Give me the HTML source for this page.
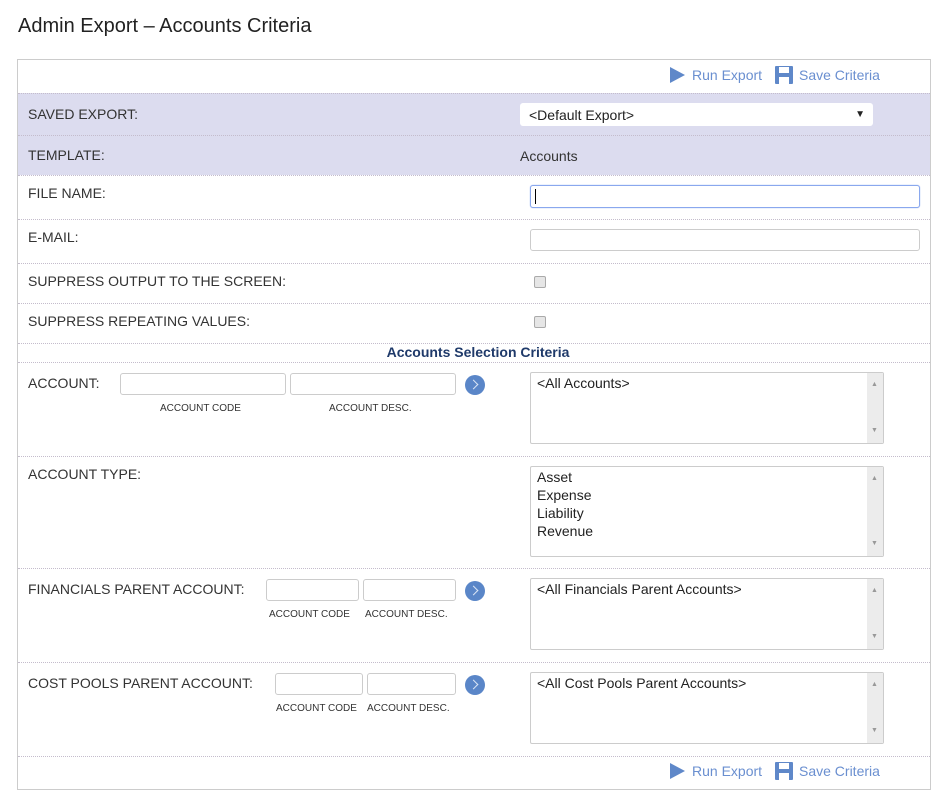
<!DOCTYPE html>
<html><head><meta charset="utf-8"><style>
body{margin:0;width:949px;height:806px;background:#fff;font-family:"Liberation Sans",sans-serif;position:relative;overflow:hidden;color:#333}
.a{position:absolute}
.t{font-size:14px;color:#333}
.hl{position:absolute;left:18px;width:912px;height:0;border-top:1px dotted #c4bccc}
.inp{position:absolute;height:20px;border:1px solid #ccc;border-radius:3px;background:#fff}
.sm{position:absolute;font-size:10px;color:#333}
.go{position:absolute;width:20px;height:20px;border-radius:50%;background:#5a86c8}
.go:after{content:"";position:absolute;left:5px;top:6px;width:6px;height:6px;border-right:1.5px solid #dbe6f5;border-top:1.5px solid #dbe6f5;transform:rotate(45deg)}
.lb{position:absolute;border:1px solid #ccc;border-radius:2px;background:#fff;font-size:14px;color:#222;line-height:18px;padding:1px 6px;box-sizing:border-box}
.sb{position:absolute;right:0;top:0;bottom:0;width:16px;background:#ececec}
.sb:before{content:"▲";position:absolute;top:3px;left:4px;font-size:7px;color:#999}
.sb:after{content:"▼";position:absolute;bottom:3px;left:4px;font-size:7px;color:#999}
.cb{position:absolute;width:10px;height:10px;border:1px solid #aaa;border-radius:2px;background:#e6e6e6}
.tb{position:absolute;font-size:14px;color:#6a8fd0}
</style></head><body>
<div class="a" style="left:18px;top:15px;font-size:20px;color:#222">Admin Export – Accounts Criteria</div>
<div class="a" style="left:17px;top:59px;width:912px;height:729px;border:1px solid #ccc"></div>
<div class="a" style="left:18px;top:93px;width:912px;height:82px;background:#dcdcef"></div>
<div class="hl" style="top:93px"></div><div class="hl" style="top:135px"></div><div class="hl" style="top:175px"></div>
<div class="hl" style="top:219px"></div><div class="hl" style="top:263px"></div><div class="hl" style="top:303px"></div>
<div class="hl" style="top:343px"></div><div class="hl" style="top:362px"></div><div class="hl" style="top:456px"></div>
<div class="hl" style="top:568px"></div><div class="hl" style="top:662px"></div><div class="hl" style="top:756px"></div>

<svg class="a" style="left:669px;top:66px" width="17" height="18"><path d="M1 1 L16 9 L1 17Z" fill="#5f88c9"/></svg>
<div class="tb" style="left:692px;top:67px">Run Export</div>
<svg class="a" style="left:775px;top:66px" width="18" height="18"><rect x="0" y="0" width="18" height="18" rx="1" fill="#5f88c9"/><rect x="4" y="1" width="10" height="6" fill="#fff"/><rect x="4" y="11" width="10" height="7" fill="#fff"/></svg>
<div class="tb" style="left:799px;top:67px">Save Criteria</div>
<svg class="a" style="left:669px;top:762px" width="17" height="18"><path d="M1 1 L16 9 L1 17Z" fill="#5f88c9"/></svg>
<div class="tb" style="left:692px;top:763px">Run Export</div>
<svg class="a" style="left:775px;top:762px" width="18" height="18"><rect x="0" y="0" width="18" height="18" rx="1" fill="#5f88c9"/><rect x="4" y="1" width="10" height="6" fill="#fff"/><rect x="4" y="11" width="10" height="7" fill="#fff"/></svg>
<div class="tb" style="left:799px;top:763px">Save Criteria</div>

<div class="a t" style="left:28px;top:106px">SAVED EXPORT:</div>
<div class="a" style="left:520px;top:103px;width:353px;height:23px;background:#fff;border-radius:3px;font-size:14px;color:#222"><span style="position:absolute;left:9px;top:4px">&lt;Default Export&gt;</span><span style="position:absolute;right:8px;top:6px;font-size:10px;line-height:12px">▼</span></div>
<div class="a t" style="left:28px;top:147px">TEMPLATE:</div>
<div class="a t" style="left:520px;top:148px">Accounts</div>

<div class="a t" style="left:28px;top:185px">FILE NAME:</div>
<div class="inp" style="left:530px;top:185px;width:388px;height:21px;border:1px solid #8aa8ee;box-shadow:0 0 1px #8aa8ee"></div>
<div class="a" style="left:535px;top:189px;width:1px;height:15px;background:#000"></div>
<div class="a t" style="left:28px;top:229px">E-MAIL:</div>
<div class="inp" style="left:530px;top:229px;width:388px"></div>
<div class="a t" style="left:28px;top:273px">SUPPRESS OUTPUT TO THE SCREEN:</div>
<div class="cb" style="left:534px;top:276px"></div>
<div class="a t" style="left:28px;top:313px">SUPPRESS REPEATING VALUES:</div>
<div class="cb" style="left:534px;top:316px"></div>
<div class="a" style="left:18px;top:344px;width:920px;text-align:center;font-size:14px;font-weight:bold;color:#1f3a6a">Accounts Selection Criteria</div>

<div class="a t" style="left:28px;top:375px">ACCOUNT:</div>
<div class="inp" style="left:120px;top:373px;width:164px"></div>
<div class="inp" style="left:290px;top:373px;width:164px"></div>
<div class="go" style="left:465px;top:375px"></div>
<div class="sm" style="left:160px;top:403px">ACCOUNT CODE</div>
<div class="sm" style="left:329px;top:403px">ACCOUNT DESC.</div>
<div class="lb" style="left:530px;top:372px;width:354px;height:72px">&lt;All Accounts&gt;<div class="sb"></div></div>

<div class="a t" style="left:28px;top:466px">ACCOUNT TYPE:</div>
<div class="lb" style="left:530px;top:466px;width:354px;height:91px">Asset<br>Expense<br>Liability<br>Revenue<div class="sb"></div></div>

<div class="a t" style="left:28px;top:581px">FINANCIALS PARENT ACCOUNT:</div>
<div class="inp" style="left:266px;top:579px;width:91px"></div>
<div class="inp" style="left:363px;top:579px;width:91px"></div>
<div class="go" style="left:465px;top:581px"></div>
<div class="sm" style="left:269px;top:609px">ACCOUNT CODE</div>
<div class="sm" style="left:365px;top:609px">ACCOUNT DESC.</div>
<div class="lb" style="left:530px;top:578px;width:354px;height:72px">&lt;All Financials Parent Accounts&gt;<div class="sb"></div></div>

<div class="a t" style="left:28px;top:675px">COST POOLS PARENT ACCOUNT:</div>
<div class="inp" style="left:275px;top:673px;width:86px"></div>
<div class="inp" style="left:367px;top:673px;width:87px"></div>
<div class="go" style="left:465px;top:675px"></div>
<div class="sm" style="left:276px;top:703px">ACCOUNT CODE</div>
<div class="sm" style="left:367px;top:703px">ACCOUNT DESC.</div>
<div class="lb" style="left:530px;top:672px;width:354px;height:72px">&lt;All Cost Pools Parent Accounts&gt;<div class="sb"></div></div>
</body></html>
